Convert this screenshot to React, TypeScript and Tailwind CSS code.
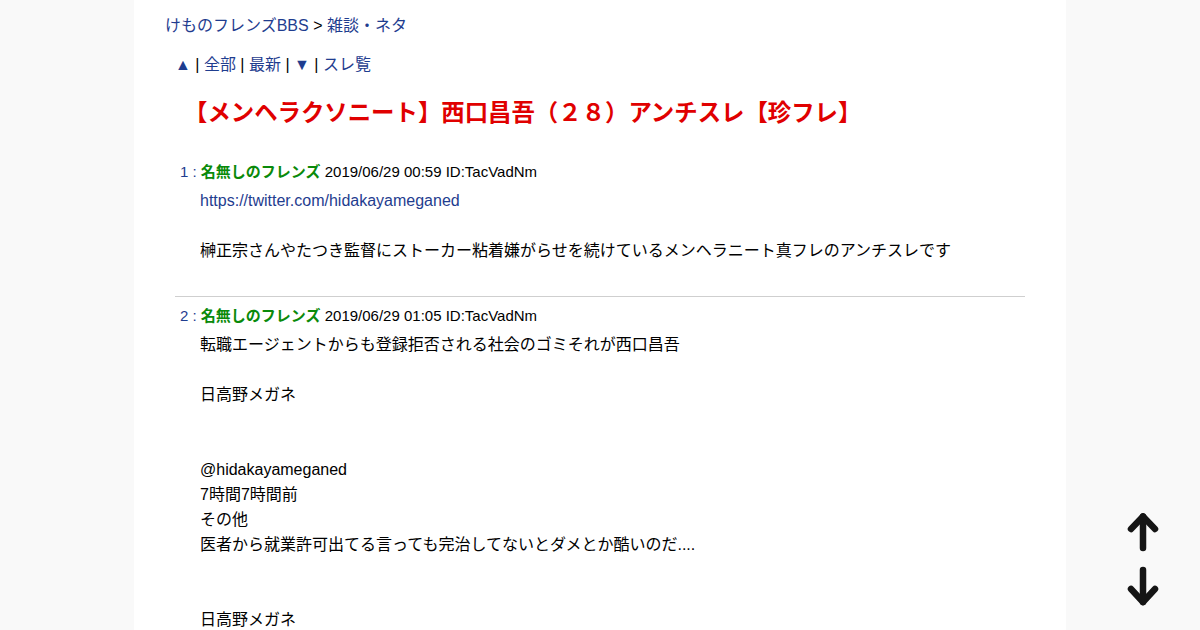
import React from "react";

const font = { fontFamily: '"Liberation Sans", "Noto Sans CJK JP", sans-serif' };

function Post({
  no,
  date,
  id,
  children,
}: {
  no: number;
  date: string;
  id: string;
  children: React.ReactNode;
}) {
  return (
    <div>
      <div className="pl-[46px] text-[15px] leading-[22px] text-black">
        <span className="text-[#1f3d8f]">{no} : </span>
        <span className="font-bold text-[#0a8a0a]">名無しのフレンズ</span>{" "}
        {date} ID:{id}
      </div>
      <div className="pl-[66px] mt-[5px] text-[16px] leading-[25px] text-black">
        {children}
      </div>
    </div>
  );
}

export default function App() {
  return (
    <div className="min-h-screen bg-[#f9f9f9]" style={font}>
      <div className="mx-auto w-[932px] min-h-screen bg-white pb-10">
        <div className="pl-[31px] pt-[14px] text-[16px] leading-[24px] text-black">
          <a className="text-[#1f3d8f]">けものフレンズBBS</a> &gt;{" "}
          <a className="text-[#1f3d8f]">雑談・ネタ</a>
        </div>

        <div className="pl-[41px] mt-[15px] text-[16px] leading-[24px] text-black">
          <a className="text-[#1f3d8f]">▲</a> | <a className="text-[#1f3d8f]">全部</a> |{" "}
          <a className="text-[#1f3d8f]">最新</a> | <a className="text-[#1f3d8f]">▼</a> |{" "}
          <a className="text-[#1f3d8f]">スレ覧</a>
        </div>

        <h1 className="pl-[50px] mt-[19px] text-[23.4px] leading-[34px] font-bold text-[#e00000]">
          【メンヘラクソニート】西口昌吾（２８）アンチスレ【珍フレ】
        </h1>

        <div className="mt-[31px]">
          <Post no={1} date="2019/06/29 00:59" id="TacVadNm">
            <a className="text-[#1f3d8f]">https://twitter.com/hidakayameganed</a>
            <br />
            <br />
            榊正宗さんやたつき監督にストーカー粘着嫌がらせを続けているメンヘラニート真フレのアンチスレです
          </Post>
        </div>

        <div className="ml-[41px] w-[850px] mt-[33px] mb-[8px] border-t border-[#cfcfcf]" />

        <Post no={2} date="2019/06/29 01:05" id="TacVadNm">
          転職エージェントからも登録拒否される社会のゴミそれが西口昌吾
          <br />
          <br />
          日高野メガネ
          <br />
          <br />
          <br />
          @hidakayameganed
          <br />
          7時間7時間前
          <br />
          その他
          <br />
          医者から就業許可出てる言っても完治してないとダメとか酷いのだ....
          <br />
          <br />
          <br />
          日高野メガネ
        </Post>
      </div>

      <div className="fixed left-[1123px] top-[510px] flex flex-col gap-[10px]">
        <svg width="40" height="42" viewBox="0 0 40 42" fill="none" stroke="#151515" strokeWidth="6.5" strokeLinecap="round" strokeLinejoin="round">
          <path d="M20 6.5 V38" />
          <path d="M8 19 L20 6.5 L32 19" />
        </svg>
        <svg width="40" height="44" viewBox="0 0 40 44" fill="none" stroke="#151515" strokeWidth="6.5" strokeLinecap="round" strokeLinejoin="round">
          <path d="M20 8 V40" />
          <path d="M8 27 L20 40 L32 27" />
        </svg>
      </div>
    </div>
  );
}
